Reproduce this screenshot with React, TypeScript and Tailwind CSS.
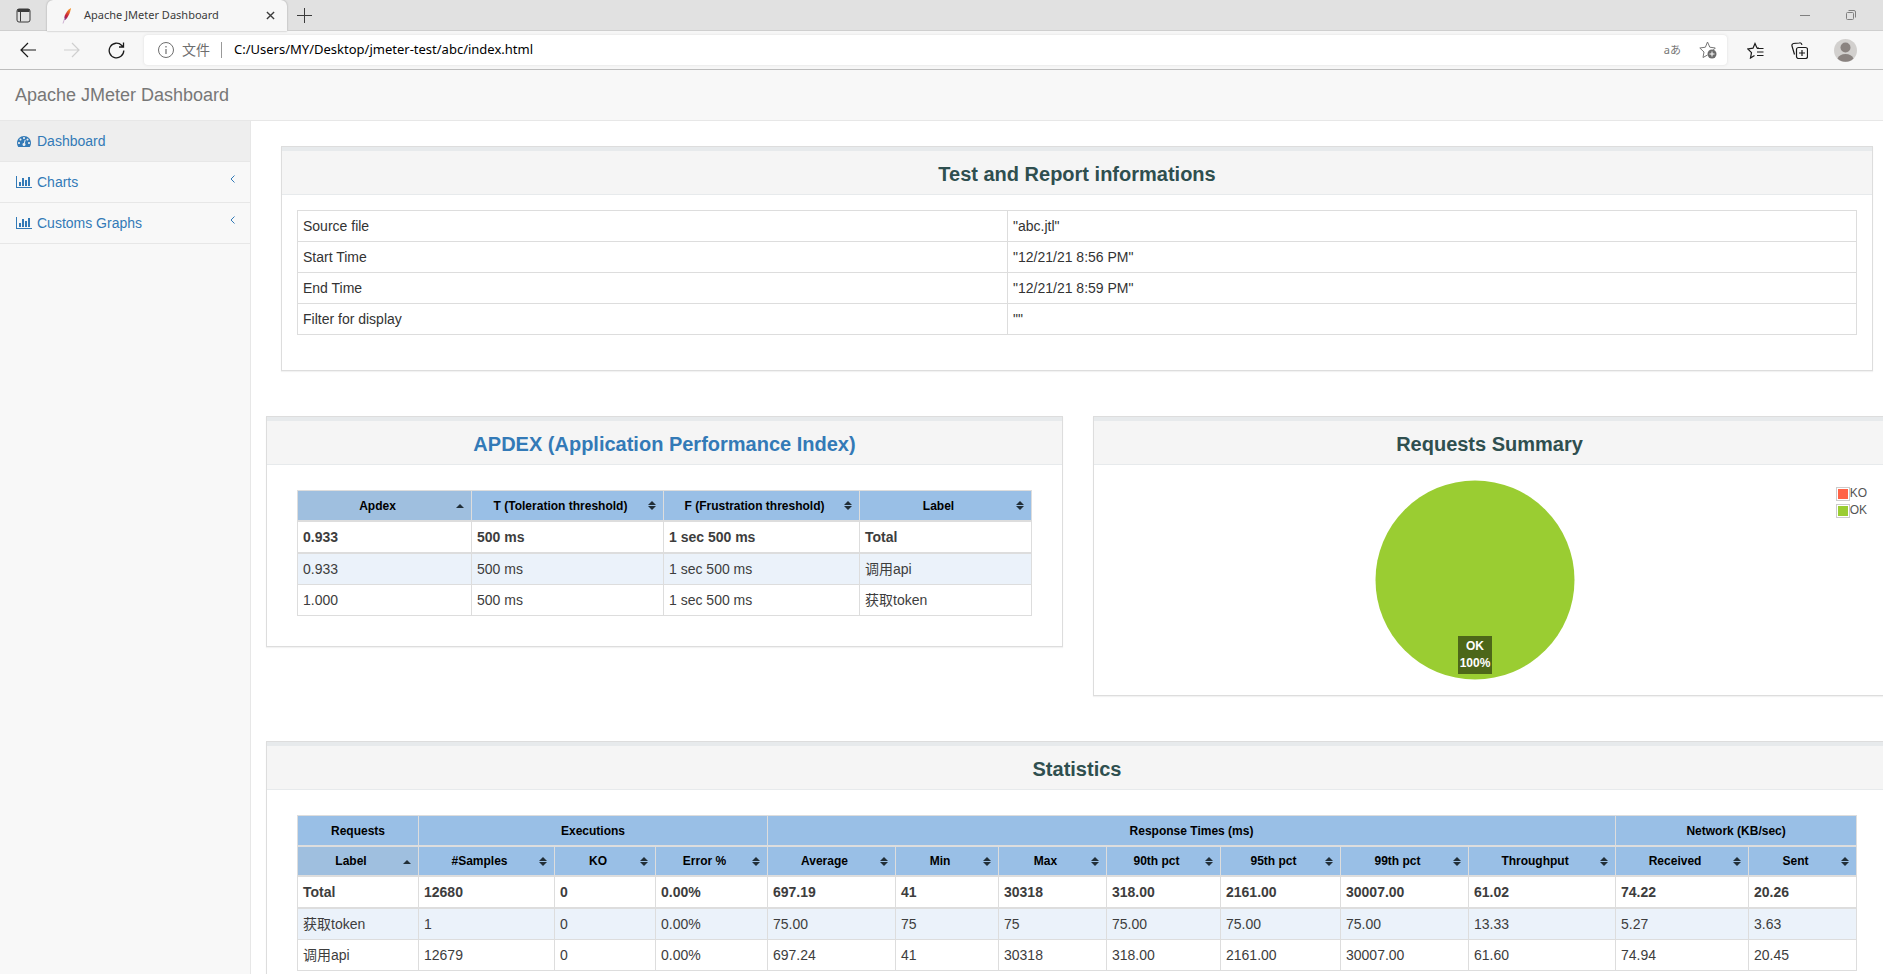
import React from 'react';

const tachometerPath =
  'M384 1152q0-53-37.5-90.5t-90.5-37.5-90.5 37.5-37.5 90.5 37.5 90.5 90.5 37.5 90.5-37.5 37.5-90.5zm192-448q0-53-37.5-90.5t-90.5-37.5-90.5 37.5-37.5 90.5 37.5 90.5 90.5 37.5 90.5-37.5 37.5-90.5zm428 481l101-382q6-26-7.5-48.5t-38.5-29.5-48 6.5-30 39.5l-101 382q-60 5-107 43.5t-63 98.5q-20 77 20 146t117 89 146-20 89-117q16-60-6-117t-72-91zm660-33q0-53-37.5-90.5t-90.5-37.5-90.5 37.5-37.5 90.5 37.5 90.5 90.5 37.5 90.5-37.5 37.5-90.5zm-640-640q0-53-37.5-90.5t-90.5-37.5-90.5 37.5-37.5 90.5 37.5 90.5 90.5 37.5 90.5-37.5 37.5-90.5zm448 192q0-53-37.5-90.5t-90.5-37.5-90.5 37.5-37.5 90.5 37.5 90.5 90.5 37.5 90.5-37.5 37.5-90.5zm320 448q0 261-141 483-19 29-54 29h-1402q-35 0-54-29-141-221-141-483 0-182 71-348t191-286 286-191 348-71 348 71 286 191 191 286 71 348z';
const barChartPath =
  'M640 896v512h-256v-512h256zm384-512v1024h-256v-1024h256zm1024 1152v128h-2048v-1536h128v1408h1920zm-640-896v768h-256v-768h256zm384-384v1152h-256v-1152h256z';

const infoRows = [
  ['Source file', '"abc.jtl"'],
  ['Start Time', '"12/21/21 8:56 PM"'],
  ['End Time', '"12/21/21 8:59 PM"'],
  ['Filter for display', '""'],
];

const apdexHeads = ['Apdex', 'T (Toleration threshold)', 'F (Frustration threshold)', 'Label'];
const apdexRows = [
  ['0.933', '500 ms', '1 sec 500 ms', 'Total'],
  ['0.933', '500 ms', '1 sec 500 ms', '调用api'],
  ['1.000', '500 ms', '1 sec 500 ms', '获取token'],
];
const apdexCols = ['w-[174px]', 'w-[192px]', 'w-[196px]', 'w-[172px]'];

const statGroups = [
  { label: 'Requests', span: 1 },
  { label: 'Executions', span: 3 },
  { label: 'Response Times (ms)', span: 7 },
  { label: 'Network (KB/sec)', span: 2 },
];
const statHeads = [
  'Label', '#Samples', 'KO', 'Error %', 'Average', 'Min', 'Max',
  '90th pct', '95th pct', '99th pct', 'Throughput', 'Received', 'Sent',
];
const statRows = [
  ['Total', '12680', '0', '0.00%', '697.19', '41', '30318', '318.00', '2161.00', '30007.00', '61.02', '74.22', '20.26'],
  ['获取token', '1', '0', '0.00%', '75.00', '75', '75', '75.00', '75.00', '75.00', '13.33', '5.27', '3.63'],
  ['调用api', '12679', '0', '0.00%', '697.24', '41', '30318', '318.00', '2161.00', '30007.00', '61.60', '74.94', '20.45'],
];
const statCols = [
  'w-[121px]', 'w-[136px]', 'w-[101px]', 'w-[112px]', 'w-[128px]', 'w-[103px]', 'w-[108px]',
  'w-[114px]', 'w-[120px]', 'w-[128px]', 'w-[147px]', 'w-[133px]', 'w-[108px]',
];

const FeatherIcon = () => (
  <svg className="h-4 w-4" viewBox="0 0 16 16">
    <defs>
      <linearGradient id="feather" x1="0" y1="1" x2="0.4" y2="0">
        <stop offset="0" stopColor="#6d2a86" />
        <stop offset="0.45" stopColor="#cb2138" />
        <stop offset="1" stopColor="#f08a24" />
      </linearGradient>
    </defs>
    <path d="M12 0C9.5 1 7 4.500 5.600 8L5 12l1.500-.3C9 9.500 11.500 4 12 0z" fill="url(#feather)" />
    <path d="M5.800 10L4 15.500" stroke="#c9a9cf" strokeWidth="0.9" fill="none" />
  </svg>
);

const BrowserBar = () => (
  <div className="font-['Noto_Sans','Noto_Sans_CJK_SC',sans-serif]">
    {/* Tab strip */}
    <div className="flex h-[31px] items-stretch bg-[#e1e1e1] text-[#3b3b3b]">
      <div className="flex w-[47px] items-center justify-center border-b border-[#cfcfcf]">
        <button aria-label="Tab actions">
          <svg className="h-[15px] w-[15px]" viewBox="0 0 15 15" fill="none" stroke="currentColor">
            <rect x="1" y="1" width="13" height="13" rx="2" />
            <path d="M1.500 2.500h12" strokeWidth="3" />
            <path d="M4.500 4v9.500" />
          </svg>
        </button>
      </div>
      <div className="flex w-[240px] items-center rounded-t-md bg-[#f7f7f7] pr-3 pl-3 shadow-[0_0_2px_#999]">
        <FeatherIcon />
        <span className="flex-1 pl-[9px] text-[11px]">Apache JMeter Dashboard</span>
        <button aria-label="Close tab">
          <svg className="h-[9px] w-[9px]" viewBox="0 0 10 10" stroke="currentColor" strokeWidth="1.500">
            <path d="M1 1l8 8M9 1l-8 8" />
          </svg>
        </button>
      </div>
      <div className="flex flex-1 items-center border-b border-[#cfcfcf] pl-2.5">
        <button aria-label="New tab">
          <svg className="h-[15px] w-[15px]" viewBox="0 0 15 15" stroke="currentColor">
            <path d="M7.500 0v15M0 7.500h15" />
          </svg>
        </button>
        <div className="ml-auto flex items-center gap-9 pr-[27px] text-[#808080]">
          <button aria-label="Minimize">
            <svg className="h-[10px] w-[10px]" viewBox="0 0 10 10" stroke="currentColor">
              <path d="M0 5.500h10" />
            </svg>
          </button>
          <button aria-label="Restore">
            <svg className="h-[10px] w-[10px]" viewBox="0 0 10 10" fill="none" stroke="currentColor">
              <rect x="0.500" y="2.500" width="7" height="7" rx="1" />
              <path d="M2.500 .5H8a1.500 1.500 0 0 1 1.500 1.500v5.500" />
            </svg>
          </button>
        </div>
      </div>
    </div>

    {/* Toolbar */}
    <div className="flex h-[39px] items-center border-b border-[#bdbdbd] bg-[#f7f7f7] pl-5">
      <button aria-label="Back" className="mr-7">
        <svg className="h-4 w-4" viewBox="0 0 16 16" fill="none" stroke="#1a1a1a" strokeWidth="1.200">
          <path d="M16 8H1M8 1L1 8l7 7" />
        </svg>
      </button>
      <button aria-label="Forward" className="mr-7">
        <svg className="h-4 w-4" viewBox="0 0 16 16" fill="none" stroke="#cfcfcf" strokeWidth="1.200">
          <path d="M0 8h15M8 1l7 7-7 7" />
        </svg>
      </button>
      <button aria-label="Refresh" className="mr-[19px]">
        <svg className="h-[17px] w-[17px]" viewBox="0 0 17 17" fill="none" stroke="#1a1a1a" strokeWidth="1.300">
          <path d="M15.800 8.500a7.300 7.300 0 1 1-2-5L15.500 5M15.500 .5V5H11" />
        </svg>
      </button>
      <div className="flex h-[30px] flex-1 items-center rounded bg-white pr-2.5 pl-3.5 shadow-[0_0_3px_#ddd]">
        <svg className="h-4 w-4" viewBox="0 0 16 16" fill="none" stroke="#6e6e6e">
          <circle cx="8" cy="8" r="7.500" />
          <path d="M8 7v5M8 4v1.500" strokeWidth="1.200" />
        </svg>
        <span className="ml-2 border-r border-[#999] pr-[11px] text-sm leading-4 text-[#6e6e6e]">文件</span>
        <input
          aria-label="Address"
          readOnly
          value="C:/Users/MY/Desktop/jmeter-test/abc/index.html"
          className="ml-3 flex-1 bg-transparent text-[13px] text-black outline-none"
        />
        <button aria-label="Translate" className="text-[11px] text-[#767676]">aあ</button>
        <button aria-label="Add to favorites" className="ml-[18px]">
          <svg className="h-[18px] w-[18px]" viewBox="0 0 18 18" fill="none" stroke="#767676">
            <path d="M8.500 14L4 16.500 5 11 .8 7l5.600-.8L8.500 1l2.300 5.200 5.500.8-2 2" />
            <circle cx="13" cy="13" r="4.500" fill="#6b6b6b" stroke="none" />
            <path d="M13 10.500v5M10.500 13h5" stroke="#fff" />
          </svg>
        </button>
      </div>
      <div className="flex items-center pr-[26px] pl-5">
        <button aria-label="Favorites">
          <svg className="h-[17px] w-[17px]" viewBox="0 0 17 17" fill="none" stroke="#1a1a1a" strokeWidth="1.200">
            <path d="M7.500 13.500L3.500 16l1-5.300L.8 7l5.200-.8L8 1.500l2 4.500h2M10 6.500h6.500M10 10h6.500M10 13.500h6.500" />
          </svg>
        </button>
        <button aria-label="Collections" className="mr-[26px] ml-[27px]">
          <svg className="h-[17px] w-[17px]" viewBox="0 0 17 17" fill="none" stroke="#1a1a1a" strokeWidth="1.200">
            <rect x="5.500" y="5.500" width="11" height="11" rx="2" />
            <path d="M11 8v6M8 11h6M3.500 12.500L1 4a2 2 0 0 1 1.500-2.500L8.500 .8q2-.3 2.500 2" />
          </svg>
        </button>
        <button aria-label="Profile">
          <svg className="h-[23px] w-[23px]" viewBox="0 0 23 23">
            <circle cx="11.500" cy="11.500" r="11.500" fill="#d2d0ce" />
            <circle cx="11.500" cy="8.500" r="5" fill="#8a8380" />
            <path d="M3.500 19.500q2-4.500 8-4.500t8 4.500a11.500 11.500 0 0 1-16 0z" fill="#8a8380" />
          </svg>
        </button>
      </div>
    </div>
  </div>
);

const NavItem = ({ label, active = false, arrow = false }: { label: string; active?: boolean; arrow?: boolean }) => (
  <li className={`border-b border-[#e7e7e7] ${active ? 'bg-[#eee]' : ''}`}>
    <a href="#" className="flex h-10 items-center pr-[15px] text-sm text-[#337ab7]">
      <span className="ml-4 flex w-4 justify-center">
        {active ? (
          <svg className="h-3.5 w-3.5" viewBox="0 0 1792 1792" fill="currentColor">
            <path d={tachometerPath} />
          </svg>
        ) : (
          <svg className="h-3.5 w-4" viewBox="0 0 2048 1792" fill="currentColor">
            <path d={barChartPath} />
          </svg>
        )}
      </span>
      <span className="flex-1 pl-[5px]">{label}</span>
      {arrow && (
        <svg className="mb-1.5 h-2 w-[5px]" viewBox="0 0 5 8" fill="none" stroke="currentColor">
          <path d="M4.500 .5L1 4l3.500 3.500" />
        </svg>
      )}
    </a>
  </li>
);

const Panel = ({ title, className = '', children }: { title: React.ReactNode; className?: string; children: React.ReactNode }) => (
  <section className={`border border-[#ddd] bg-white shadow-[0_1px_1px_rgba(0,0,0,0.05)] ${className}`}>
    <h2 className="flex h-12 items-center justify-center border-t-4 border-b border-[#e7eaec] bg-[#f5f5f5] pt-0.5 text-xl font-bold text-[#2f4f4f]">
      {title}
    </h2>
    {children}
  </section>
);

const SortIcon = ({ asc = false }: { asc?: boolean }) => (
  <svg className="h-[9px] w-[8px] shrink-0" viewBox="0 0 8 9" fill="#222f38">
    {asc ? <path d="M0 7h8L4 3z" /> : <path d="M0 4h8L4 0zM0 5h8L4 9z" />}
  </svg>
);

const headRow = '[&>th]:border-b-2 [&>th]:border-l [&>th]:border-[#ddd] [&>th]:bg-[#99bfe6] [&>th]:text-xs [&>th]:font-bold [&>th]:text-black';

const SortHead = ({ label, asc }: { label: string; asc: boolean }) => (
  <th className={asc ? 'bg-[#9fbfdf]!' : ''}>
    <button className="flex w-full items-center pr-[7px] pl-1">
      <span className="flex-1 pr-1 pl-px whitespace-nowrap">{label}</span>
      <SortIcon asc={asc} />
    </button>
  </th>
);

const DataRows = ({ rows }: { rows: string[][] }) => (
  <tbody>
    {rows.map((row, i) => (
      <tr
        key={row.join()}
        className={i === 0 ? 'h-8 font-bold [&>td]:border-b-2' : i === 1 ? 'h-[31px] bg-[#ebf2fa]' : 'h-[31px]'}
      >
        {row.map((cell, j) => (
          <td key={j} className="border-b border-l border-[#ddd] pl-[5px] text-sm text-[#3d3d3d]">{cell}</td>
        ))}
      </tr>
    ))}
  </tbody>
);

const tableClass = 'w-full table-fixed border-separate border-spacing-0 border-t border-r border-[#ddd]';

export default function App() {
  return (
    <div className="flex h-screen flex-col overflow-hidden bg-[#f8f8f8] font-['Liberation_Sans','Noto_Sans_CJK_SC',sans-serif] text-[#333]">
      <BrowserBar />

      <header className="flex h-[51px] shrink-0 items-center border-b border-[#e7e7e7] px-[15px]">
        <a href="#" className="text-lg text-[#777]">Apache JMeter Dashboard</a>
      </header>

      <div className="flex min-h-0 flex-1">
        <nav className="w-[250px] shrink-0">
          <ul>
            <NavItem label="Dashboard" active />
            <NavItem label="Charts" arrow />
            <NavItem label="Customs Graphs" arrow />
          </ul>
        </nav>

        <main className="min-w-0 flex-1 overflow-hidden border-l border-[#e7e7e7] bg-white pt-[25px]">
          <Panel title="Test and Report informations" className="mr-[10px] ml-[30px] pb-[35px]">
            <div className="pt-[15px] pr-4 pl-[15px]">
              <table className={tableClass}>
                <colgroup>
                  <col className="w-[710px]" />
                  <col className="w-[849px]" />
                </colgroup>
                <tbody>
                  {infoRows.map(([name, value]) => (
                    <tr key={name} className="h-[31px]">
                      <td className="border-b border-l border-[#ddd] pl-[5px] text-sm">{name}</td>
                      <td className="border-b border-l border-[#ddd] pl-[5px] text-sm">{value}</td>
                    </tr>
                  ))}
                </tbody>
              </table>
            </div>
          </Panel>

          <div className="mt-[45px] -mr-[3px] ml-[15px] flex items-start gap-[30px]">
            <Panel
              title={<a href="#" className="text-[#337ab7]">APDEX (Application Performance Index)</a>}
              className="flex-1"
            >
              <div className="px-[30px] pt-[25px] pb-[30px]">
                <table className={tableClass}>
                  <colgroup>
                    {apdexCols.map((w, i) => <col key={i} className={w} />)}
                  </colgroup>
                  <thead>
                    <tr className={`h-[31px] ${headRow}`}>
                      {apdexHeads.map((h, i) => <SortHead key={h} label={h} asc={i === 0} />)}
                    </tr>
                  </thead>
                  <DataRows rows={apdexRows} />
                </table>
              </div>
            </Panel>

            <Panel title="Requests Summary" className="flex-1">
              <div className="relative flex h-[230px] justify-center pt-[15px]">
                <svg className="mr-[29px] h-[200px] w-[200px]" viewBox="0 0 200 200">
                  <circle cx="100" cy="100" r="99.500" fill="#9acd32" />
                </svg>
                <div className="absolute inset-x-0 top-[171px] flex justify-center">
                  <div className="mr-[29px] bg-[#4d6719] px-0.5 py-0.5 text-center text-xs leading-[17px] font-bold text-white">
                    <div>OK</div>
                    <div>100%</div>
                  </div>
                </div>
                <ul className="absolute top-5 right-[18px] text-xs leading-[17px] text-[#545454]">
                  <li className="flex items-center">
                    <span className="h-3.5 w-3.5 border border-[#ccc] bg-[#ff6347] bg-clip-content p-px" />KO
                  </li>
                  <li className="flex items-center">
                    <span className="h-3.5 w-3.5 border border-[#ccc] bg-[#9acd32] bg-clip-content p-px" />OK
                  </li>
                </ul>
              </div>
            </Panel>
          </div>

          <Panel title="Statistics" className="mt-[45px] -mr-[5px] ml-[15px]">
            <div className="pt-[25px] pr-[31px] pb-[30px] pl-[30px]">
              <table className={tableClass}>
                <colgroup>
                  {statCols.map((w, i) => <col key={i} className={w} />)}
                </colgroup>
                <thead>
                  <tr className={`h-[31px] ${headRow}`}>
                    {statGroups.map((g) => <th key={g.label} colSpan={g.span}>{g.label}</th>)}
                  </tr>
                  <tr className={`h-[30px] ${headRow}`}>
                    {statHeads.map((h, i) => <SortHead key={h} label={h} asc={i === 0} />)}
                  </tr>
                </thead>
                <DataRows rows={statRows} />
              </table>
            </div>
          </Panel>
        </main>
      </div>
    </div>
  );
}
